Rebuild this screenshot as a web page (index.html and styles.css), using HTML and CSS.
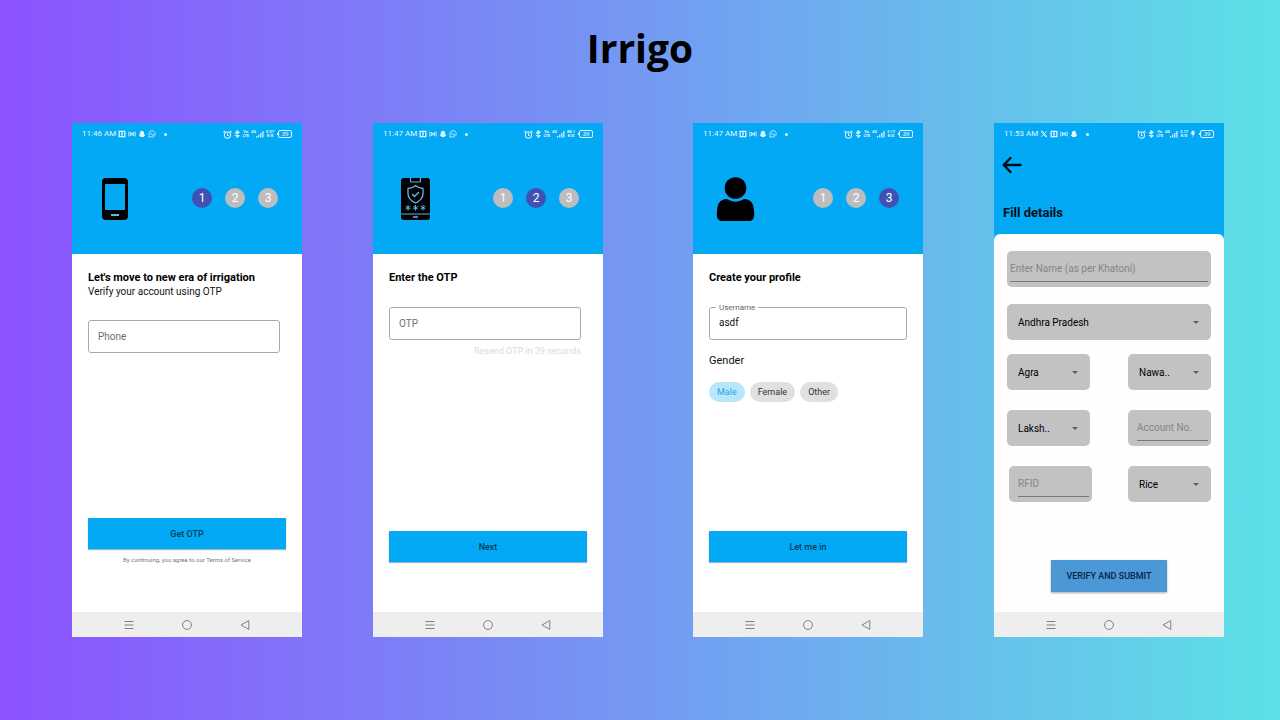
FILE: index.html
```html
<!DOCTYPE html>
<html lang="en">
<head>
<meta charset="utf-8">
<meta name="viewport" content="width=device-width, initial-scale=1">
<title>Irrigo</title>
<link rel="stylesheet" href="styles.css">
</head>
<body>
<svg class="sprite" aria-hidden="true">
  <symbol id="i-square" viewBox="0 0 8 8"><path fill="currentColor" fill-rule="evenodd" d="M.5.7h7v6.6h-7zM1.800 2v4h4.400V2zM3 2.600h2v1.100H3zM3 4.300h2v1.100H3z"/></symbol>
  <symbol id="i-bow" viewBox="0 0 8 8"><path fill="none" stroke="currentColor" stroke-width=".8" d="M.8 1.500v5M7.200 1.500v5M2.300 2v4l3.400-4v4z"/></symbol>
  <symbol id="i-ghost" viewBox="0 0 8 8"><path fill="currentColor" d="M4 .8c1.400 0 2.100 1 2.100 2.200v1.100l1.200 1.400-1.200.6-.5.8H2.400l-.5-.8-1.200-.6 1.200-1.400V3C1.900 1.800 2.600.8 4 .8z"/></symbol>
  <symbol id="i-chat" viewBox="0 0 8 8"><path fill="none" stroke="currentColor" stroke-width=".8" d="M.8 7.200l.5-1.700A3.200 3.200 0 1 1 2.600 6.700zM2.800 2.600c0 1.500 1.200 2.600 2.600 2.600l.2-.8-.9-.4"/></symbol>
  <symbol id="i-x" viewBox="0 0 8 8"><path fill="none" stroke="currentColor" stroke-width=".9" d="M1.200 1.200h1.200l4.400 5.600H5.600zM6.600 1.200L1.300 6.800"/></symbol>
  <symbol id="i-alarm" viewBox="0 0 8 8"><g fill="none" stroke="currentColor" stroke-width=".9"><circle cx="4" cy="4.500" r="2.800"/><path d="M.4 2L2 .7M7.600 2L6 .7M4 2.900v1.800l1.200.5"/></g></symbol>
  <symbol id="i-bt" viewBox="0 0 6 8"><path fill="none" stroke="currentColor" stroke-width="1.100" d="M1 2.200l4 3.600L3 7.300V.7l2 1.500-4 3.600"/></symbol>
  <symbol id="i-signal" viewBox="0 0 8 8"><path fill="currentColor" d="M0 6h1.200v1.500H0zM2.100 4.800h1.200v2.700H2.100zM4.200 3h1.200v4.500H4.200zM6.300 1h1.200v6.500H6.300z"/></symbol>
  <symbol id="i-bolt" viewBox="0 0 5 8"><path fill="currentColor" d="M1.300.8h3L3.400 3h1.300L1.700 7.400l.5-2.900H.5z"/></symbol>
  <symbol id="i-menu" viewBox="0 0 10 10"><path stroke="currentColor" d="M.5 1.500h9M.5 5h9M.5 8.500h9"/></symbol>
  <symbol id="i-home" viewBox="0 0 10 10"><circle cx="5" cy="5" r="4.400" fill="none" stroke="currentColor"/></symbol>
  <symbol id="i-back" viewBox="0 0 10 10"><path fill="none" stroke="currentColor" stroke-linejoin="round" d="M8.800.6v8.800L1 5z"/></symbol>
</svg>

<h1 class="brand">Irrigo</h1>

<main class="board">
  <section class="phone">
    <header class="top">
      <div class="status">
        <span class="time">11:46 AM</span>
        <span class="apps"><svg class="ic"><use href="#i-square"/></svg><svg class="ic"><use href="#i-bow"/></svg><svg class="ic"><use href="#i-ghost"/></svg><svg class="ic"><use href="#i-chat"/></svg><i class="dot"></i></span>
        <span class="system"><svg class="ic"><use href="#i-alarm"/></svg><svg class="ic slim"><use href="#i-bt"/></svg><span class="tiny">Vo<br>LTE</span><span class="net"><span class="tiny">4G</span><svg class="ic"><use href="#i-signal"/></svg></span><span class="tiny">0.57<br>K/S</span><span class="battery">39</span></span>
      </div>
      <div class="progress">
        <svg class="hero" viewBox="0 -1 46 46" aria-hidden="true"><path fill-rule="evenodd" d="M14 2h18q4 0 4 4v34q0 4-4 4H14q-4 0-4-4V6q0-4 4-4zM13 8v26h20V8z"/><path fill="#5fb6e2" d="M19 38h8v2h-8z"/></svg>
        <ol class="steps"><li class="step current">1</li><li class="step">2</li><li class="step">3</li></ol>
      </div>
    </header>
    <form class="body">
      <h2 class="heading">Let's move to new era of irrigation</h2>
      <p class="sub">Verify your account using OTP</p>
      <input class="box" type="tel" placeholder="Phone" aria-label="Phone">
      <button class="action" type="button">Get OTP</button>
      <p class="terms">By continuing, you agree to our Terms of Service</p>
    </form>
    <nav class="keys"><button class="key" type="button" aria-label="Recent"><svg><use href="#i-menu"/></svg></button><button class="key" type="button" aria-label="Home"><svg><use href="#i-home"/></svg></button><button class="key" type="button" aria-label="Back"><svg><use href="#i-back"/></svg></button></nav>
  </section>

  <section class="phone">
    <header class="top">
      <div class="status">
        <span class="time">11:47 AM</span>
        <span class="apps"><svg class="ic"><use href="#i-square"/></svg><svg class="ic"><use href="#i-bow"/></svg><svg class="ic"><use href="#i-ghost"/></svg><svg class="ic"><use href="#i-chat"/></svg><i class="dot"></i></span>
        <span class="system"><svg class="ic"><use href="#i-alarm"/></svg><svg class="ic slim"><use href="#i-bt"/></svg><span class="tiny">Vo<br>LTE</span><span class="net"><span class="tiny">4G</span><svg class="ic"><use href="#i-signal"/></svg></span><span class="tiny">88.1<br>K/S</span><span class="battery">39</span></span>
      </div>
      <div class="progress">
        <svg class="hero" viewBox="0 -1 46 46" aria-hidden="true"><rect x="8" y="2" width="29" height="42" rx="3"/><g fill="none" stroke="#5fb6e2" stroke-width="1.200"><path d="M17.500 2v3q0 1 1 1h8q1 0 1-1V2M8 38h29"/><path stroke-width="1.300" d="M22.500 9.500q3.500 3 7.500 3v5q0 6-7.500 9.500-7.500-3.500-7.500-9.500v-5q4 0 7.500-3z"/><path stroke-width="1.500" d="M19 18l2.500 2.500 4.500-4.500M20 41h5"/><path stroke-width="1" d="M15 29v5.600M12.600 30.400l4.800 2.800M17.400 30.400l-4.800 2.800M22.500 29v5.600M20.100 30.400l4.800 2.800M24.900 30.400l-4.800 2.800M30 29v5.600M27.600 30.400l4.800 2.800M32.400 30.400l-4.800 2.800"/></g></svg>
        <ol class="steps"><li class="step">1</li><li class="step current">2</li><li class="step">3</li></ol>
      </div>
    </header>
    <form class="body">
      <h2 class="heading">Enter the OTP</h2>
      <input class="box" type="text" placeholder="OTP" aria-label="OTP">
      <p class="resend">Resend OTP in 39 seconds</p>
      <button class="action low" type="button">Next</button>
    </form>
    <nav class="keys"><button class="key" type="button" aria-label="Recent"><svg><use href="#i-menu"/></svg></button><button class="key" type="button" aria-label="Home"><svg><use href="#i-home"/></svg></button><button class="key" type="button" aria-label="Back"><svg><use href="#i-back"/></svg></button></nav>
  </section>

  <section class="phone apart">
    <header class="top">
      <div class="status">
        <span class="time">11:47 AM</span>
        <span class="apps"><svg class="ic"><use href="#i-square"/></svg><svg class="ic"><use href="#i-bow"/></svg><svg class="ic"><use href="#i-ghost"/></svg><svg class="ic"><use href="#i-chat"/></svg><i class="dot"></i></span>
        <span class="system"><svg class="ic"><use href="#i-alarm"/></svg><svg class="ic slim"><use href="#i-bt"/></svg><span class="tiny">Vo<br>LTE</span><span class="net"><span class="tiny">4G</span><svg class="ic"><use href="#i-signal"/></svg></span><span class="tiny">3.17<br>K/S</span><span class="battery">39</span></span>
      </div>
      <div class="progress">
        <svg class="hero" viewBox="0 -1 46 46" aria-hidden="true"><circle cx="22.500" cy="12" r="10.800"/><path d="M13 23q1.500 0 3 1 6.500 3.500 13 0 1.500-1 3-1 7 .5 8.500 8 .7 3.500.7 8 0 6-6 6.500H9.800q-6-.5-6-6.500 0-4.500.7-8 1.500-7.500 8.500-8z"/></svg>
        <ol class="steps"><li class="step">1</li><li class="step">2</li><li class="step current">3</li></ol>
      </div>
    </header>
    <form class="body">
      <h2 class="heading">Create your profile</h2>
      <div class="outlined"><label class="floating" for="username">Username</label><input class="box full" id="username" type="text" value="asdf"></div>
      <fieldset class="gender">
        <legend class="legend">Gender</legend>
        <div class="chips">
          <label class="chip"><input type="radio" name="gender" checked><span>Male</span></label>
          <label class="chip"><input type="radio" name="gender"><span>Female</span></label>
          <label class="chip"><input type="radio" name="gender"><span>Other</span></label>
        </div>
      </fieldset>
      <button class="action low" type="button">Let me in</button>
    </form>
    <nav class="keys"><button class="key" type="button" aria-label="Recent"><svg><use href="#i-menu"/></svg></button><button class="key" type="button" aria-label="Home"><svg><use href="#i-home"/></svg></button><button class="key" type="button" aria-label="Back"><svg><use href="#i-back"/></svg></button></nav>
  </section>

  <section class="phone details">
    <header class="top">
      <div class="status">
        <span class="time">11:53 AM</span>
        <span class="apps"><svg class="ic"><use href="#i-x"/></svg><svg class="ic"><use href="#i-square"/></svg><svg class="ic"><use href="#i-bow"/></svg><svg class="ic"><use href="#i-ghost"/></svg><i class="dot"></i></span>
        <span class="system"><svg class="ic"><use href="#i-alarm"/></svg><svg class="ic slim"><use href="#i-bt"/></svg><span class="tiny">Vo<br>LTE</span><span class="net"><span class="tiny">4G</span><svg class="ic"><use href="#i-signal"/></svg></span><span class="tiny">3.17<br>K/S</span><svg class="ic slim"><use href="#i-bolt"/></svg><span class="battery">39</span></span>
      </div>
      <button class="return" type="button" aria-label="Go back"><svg viewBox="0 0 20 18"><path fill="none" stroke="currentColor" stroke-width="2.400" stroke-linecap="round" stroke-linejoin="round" d="M18.500 9H2M8.500 2L1.700 9l6.800 7"/></svg></button>
      <h2 class="page-title">Fill details</h2>
    </header>
    <form class="sheet">
      <div class="tile name"><input class="line" type="text" placeholder="Enter Name (as per Khatoni)" aria-label="Name"></div>
      <div class="tile pick wide"><select aria-label="State"><option>Andhra Pradesh</option></select></div>
      <div class="pairs">
        <div class="tile pick"><select aria-label="District"><option>Agra</option></select></div>
        <div class="tile pick"><select aria-label="City"><option>Nawa..</option></select></div>
        <div class="tile pick"><select aria-label="Village"><option>Laksh..</option></select></div>
        <div class="tile"><input class="line" type="text" placeholder="Account No." aria-label="Account number"></div>
        <div class="tile shifted"><input class="line" type="text" placeholder="RFID" aria-label="RFID"></div>
        <div class="tile pick"><select aria-label="Crop"><option>Rice</option></select></div>
      </div>
      <button class="submit" type="button">VERIFY AND SUBMIT</button>
    </form>
    <nav class="keys"><button class="key" type="button" aria-label="Recent"><svg><use href="#i-menu"/></svg></button><button class="key" type="button" aria-label="Home"><svg><use href="#i-home"/></svg></button><button class="key" type="button" aria-label="Back"><svg><use href="#i-back"/></svg></button></nav>
  </section>
</main>
</body>
</html>
```
FILE: styles.css
```css
* { box-sizing: border-box; }
body {
  margin: 0;
  min-height: 100vh;
  background: linear-gradient(90deg, #8c52ff, #5ce1e6);
  font-family: Roboto, "Liberation Sans", sans-serif;
  color: #111;
}
button, input, select { font: inherit; color: inherit; border-radius: 0; }
h1, h2, p, ol, fieldset, legend { margin: 0; padding: 0; border: 0; }
.sprite { display: none; }

.brand {
  padding: 20px 0 47px;
  text-align: center;
  font: 700 39px/56px "Open Sans", "Noto Sans", sans-serif;
  color: #000;
}
.board {
  display: flex;
  align-items: stretch;
  padding: 0 56px 0 72px;
}
.phone {
  flex: 1 1 0;
  min-width: 0;
  min-height: 514px;
  display: flex;
  flex-direction: column;
  background: #fff;
}
.phone + .phone { margin-left: 71px; }
.phone + .apart { margin-left: 90px; }

.top { background: #03a9f4; padding-bottom: 33px; }
.status {
  display: flex;
  align-items: center;
  height: 22px;
  padding: 0 10px;
  color: #e4f5ff;
  font-size: 8px;
  line-height: 10px;
}
.time { white-space: nowrap; }
.apps { display: flex; align-items: center; gap: 2px; margin-left: 2px; }
.ic { display: block; flex: none; width: 8px; height: 8px; }
.slim { width: 6px; }
.dot { width: 3px; height: 3px; margin-left: 6px; border-radius: 50%; background: currentColor; }
.system { display: flex; align-items: center; gap: 2px; margin-left: auto; }
.tiny { font-size: 4px; line-height: 4px; font-weight: 700; text-align: center; }
.net { display: flex; align-items: flex-start; }
.system .ic:first-child { width: 9px; height: 9px; }
.battery {
  position: relative;
  width: 14px;
  height: 8px;
  margin-left: 2px;
  border: 1px solid currentColor;
  border-radius: 2px;
  font-size: 6px;
  line-height: 6px;
  text-align: center;
}
.battery::before {
  content: "";
  position: absolute;
  left: -2px;
  top: 2px;
  width: 1px;
  height: 2px;
  background: currentColor;
}

.progress {
  display: flex;
  align-items: center;
  justify-content: space-between;
  padding: 30px 24px 0 20px;
}
.hero { width: 46px; height: 46px; }
.steps { display: flex; gap: 13px; list-style: none; }
.step {
  width: 20px;
  height: 20px;
  border-radius: 50%;
  background: #bdbdbd;
  color: #fff;
  font-size: 12px;
  line-height: 20px;
  text-align: center;
}
.current { background: #3f51b5; }

.body {
  flex: 1;
  display: flex;
  flex-direction: column;
  align-items: stretch;
  padding: 17px 16px 0;
}
.heading { font-size: 11px; line-height: 14px; font-weight: 700; color: #000; }
.sub { font-size: 10px; line-height: 13px; }
.box {
  align-self: stretch;
  width: auto;
  height: 33px;
  margin: 22px 6px 0 0;
  padding: 0 9px;
  border: 1px solid #aaa;
  border-radius: 3px;
  background: transparent;
  font-size: 10px;
  line-height: 14px;
}
.box::placeholder { color: #707070; opacity: 1; }
.resend { padding: 5px 6px 0 0; font-size: 9px; line-height: 12px; color: #dadada; text-align: right; }
.outlined { position: relative; margin-top: 22px; }
.full { display: block; width: 100%; margin: 0; padding-bottom: 2px; }
.floating {
  position: absolute;
  top: -4px;
  left: 7px;
  padding: 0 3px;
  background: #fff;
  color: #666;
  font-size: 8px;
  line-height: 10px;
}
.gender { margin-top: 14px; }
.legend { font-size: 11px; line-height: 14px; }
.chips { display: flex; gap: 5px; padding-top: 14px; }
.chip { position: relative; display: block; }
.chip input { position: absolute; inset: 0; width: 100%; height: 100%; margin: 0; opacity: 0; }
.chip span {
  display: block;
  padding: 0 8px;
  border-radius: 10px;
  background: #e0e0e0;
  color: #333;
  font-size: 9px;
  line-height: 20px;
}
.chip input:checked + span { background: #b8e7fc; color: #22a7dc; }
.action {
  height: 31px;
  margin-top: auto;
  border: 0;
  background: #03a9f4;
  box-shadow: 0 1px 1px #9bb6c4;
  color: #063a5c;
  font-size: 9px;
  font-weight: 500;
}
.low { margin-bottom: 50px; }
.terms { margin: 6px 0 48px; font-size: 6px; line-height: 9px; color: #777; text-align: center; }

.keys {
  display: flex;
  align-items: center;
  justify-content: space-evenly;
  height: 25px;
  padding: 0 4px;
  background: #eee;
  color: #808080;
}
.key { width: 10px; height: 10px; padding: 0; border: 0; background: none; }
.key svg { display: block; width: 10px; height: 10px; }

.details .top { padding-bottom: 20px; }
.return { display: block; margin: 11px 0 0 8px; padding: 0; border: 0; background: none; color: #001018; }
.return svg { display: block; width: 20px; height: 18px; }
.page-title { padding: 31px 0 0 9px; font-size: 13px; line-height: 16px; color: #001018; }
.sheet {
  flex: 1;
  display: flex;
  flex-direction: column;
  margin-top: -7px;
  padding: 17px 13px 20px;
  border-radius: 6px 6px 0 0;
  background: #fffdfe;
}
.tile {
  position: relative;
  height: 36px;
  padding: 5px 3px 5px 9px;
  border-radius: 5px;
  background: #c2c2c2;
}
.name { padding-left: 3px; }
.wide { margin-top: 17px; }
.shifted { left: 2px; }
.line {
  display: block;
  width: 100%;
  height: 26px;
  padding: 0;
  border: 0;
  border-bottom: 1px solid #777;
  background: none;
  font-size: 10px;
}
.line::placeholder { color: #858585; opacity: 1; }
.pick { padding: 0; }
.pick select {
  appearance: none;
  width: 100%;
  height: 36px;
  padding: 0 22px 0 11px;
  border: 0;
  background: none;
  font-size: 10px;
  color: #000;
}
.pick::after {
  content: "";
  position: absolute;
  right: 12px;
  top: 17px;
  border: solid transparent;
  border-width: 3px 3px 0;
  border-top-color: #606060;
  pointer-events: none;
}
.pairs {
  display: grid;
  grid-template-columns: 1fr 1fr;
  gap: 20px 38px;
  margin-top: 14px;
}
.submit {
  align-self: center;
  height: 32px;
  margin-top: auto;
  padding: 0 15px;
  border: 0;
  background: #4c98d6;
  box-shadow: 0 1px 2px #aaa;
  color: #06264a;
  font-size: 9px;
  font-weight: 500;
}
```
